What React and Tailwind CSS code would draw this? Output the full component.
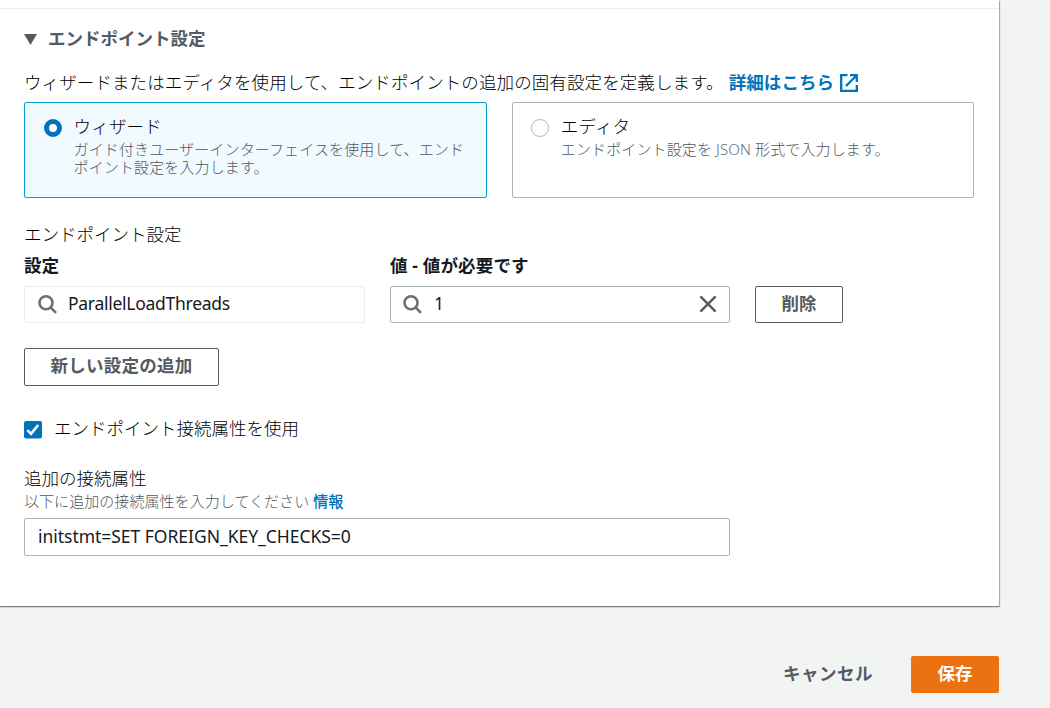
const FONT = "font-['Noto_Sans','Noto_Sans_CJK_JP',sans-serif]";
const JP = "font-['Noto_Sans','Noto_Sans_CJK_JP_Light','Noto_Sans_CJK_JP',sans-serif] font-light";

function SearchIcon() {
  return (
    <svg viewBox="0 0 20 20" className="h-5 w-5 shrink-0" fill="none" stroke="#687078" strokeWidth="2.6">
      <circle cx="8" cy="7.8" r="6.5" />
      <path d="M12.6 12.4 L18 17.8" />
    </svg>
  );
}

function CloseIcon() {
  return (
    <svg viewBox="0 0 18 18" className="mb-[2px] h-[18px] w-[18px] shrink-0" fill="none" stroke="#545b64" strokeWidth="2.5">
      <path d="M1.4 1.4 L16.6 16.6 M16.6 1.4 L1.4 16.6" />
    </svg>
  );
}

function ExternalIcon() {
  return (
    <svg viewBox="0 0 18 18" className="ml-[6px] mt-[2px] h-[18px] w-[18px] shrink-0" fill="none" stroke="#0073bb" strokeWidth="2.3">
      <path d="M7.5 1.2 H1.2 V16.8 H16.8 V11" />
      <path d="M10 1.2 H16.8 V8 M16.8 1.2 L6 12" />
    </svg>
  );
}

function Tile({ selected, title, children }) {
  return (
    <div
      className={
        "flex h-24 flex-1 rounded-[2px] border pt-[13px] " +
        (selected ? "border-[#00a1c9] bg-[#f1faff] pl-[19px]" : "border-[#aab7b8] bg-white pl-[18.5px]")
      }
    >
      <span
        className={
          "mt-[3px] h-[18px] w-[18px] shrink-0 rounded-full bg-white " +
          (selected ? "border-[5px] border-[#0073bb]" : "border-[1.5px] border-[#aab7b8]")
        }
      />
      <div className="ml-[11.5px] min-w-0">
        <div className={JP + " h-[24px] leading-[21px] tracking-[0.2px] text-black"}>{title}</div>
        <div className={JP + " whitespace-nowrap text-[15px] leading-[18px] tracking-[0.13px] text-[#4f575f]"}>
          {children}
        </div>
      </div>
    </div>
  );
}

export default function App() {
  return (
    <div className={FONT + " h-[708px] w-[1050px] overflow-hidden bg-[#f2f3f3] text-[17.5px] text-[#16191f]"}>
      <main className="h-[606px] w-[999px] bg-white shadow-[0_1px_1px_0_#778587,1px_1px_1px_0_#aab7b8]">
        <div className="h-[9px] border-b border-[#eaeded]" />
        <div className="px-6 pt-[17px]">
          <h2 className="flex h-6 items-center font-bold leading-6 text-[#545b64]">
            <svg viewBox="0 0 13 11" className="mr-[11px] mt-[2px] h-[11px] w-[13px]" fill="#545b64">
              <path d="M0 0 H13 L6.5 11 Z" />
            </svg>
            <span className="pb-px">エンドポイント設定</span>
          </h2>

          <p className="mt-[21px] flex h-[22px] items-center whitespace-nowrap leading-[22px] tracking-[0.1px]">
            <span className={JP + " text-black"}>
              ウィザードまたはエディタを使用して、エンドポイントの追加の固有設定を定義します。
            </span>
            <a className="ml-[5px] flex items-center font-bold text-[#0073bb]">
              詳細はこちら
              <ExternalIcon />
            </a>
          </p>

          <div className="mt-[9px] flex w-[950px] gap-[25px]">
            <Tile selected title="ウィザード">
              ガイド付きユーザーインターフェイスを使用して、エンド
              <br />
              ポイント設定を入力します。
            </Tile>
            <Tile title="エディタ">
              エンドポイント設定を <span className="text-[#687078]">JSON</span> 形式で入力します。
            </Tile>
          </div>

          <div className={JP + " mt-[25px] h-[22px] leading-[22px] text-black"}>エンドポイント設定</div>
          <div className="mt-[9px] flex h-[22px] font-bold leading-[22px]">
            <div className="w-[366px]">設定</div>
            <div className="tracking-[0.15px]">値 - 値が必要です</div>
          </div>
          <div className="mt-[10px] flex h-[37px] gap-[25px]">
            <div className="flex w-[341px] items-center rounded-[2px] border border-[#eaeded] pl-[12.5px]">
              <SearchIcon />
              <span className="ml-[10.5px] pb-[2px] tracking-[-0.27px]">ParallelLoadThreads</span>
            </div>
            <div className="flex w-[340px] items-center rounded-[2px] border border-[#aab7b8] pl-3 pr-3">
              <SearchIcon />
              <span className="ml-[11px] flex-1 pb-[2px]">1</span>
              <CloseIcon />
            </div>
            <button className="w-[88px] rounded-[2px] border border-[#545b64] pb-[3px] font-bold text-[#545b64]">
              削除
            </button>
          </div>
          <button className="mt-[25px] block h-[38px] w-[195px] rounded-[2px] border border-[#545b64] pb-[3px] font-bold tracking-[0.25px] text-[#545b64]">
            新しい設定の追加
          </button>

          <label className="mt-8 flex h-[22px] items-center leading-[22px]">
            <svg viewBox="0 0 18 18" className="mr-3 mt-px h-[18px] w-[18px]">
              <rect width="18" height="17.5" rx="2" fill="#0073bb" />
              <path d="M3.4 9.2 L7 12.8 L14.2 4" fill="none" stroke="#fff" strokeWidth="2.6" />
            </svg>
            <span className={JP + " pb-[2px] text-black"}>エンドポイント接続属性を使用</span>
          </label>

          <div className={JP + " mt-[27px] h-[22px] leading-[22px] text-black"}>追加の接続属性</div>
          <div className={JP + " mt-[3px] h-[18px] text-[15px] leading-[18px] tracking-[0.06px] text-[#4f575f]"}>
            以下に追加の接続属性を入力してください <a className="font-bold text-[#0073bb]">情報</a>
          </div>
          <div className="mt-2 flex h-[38px] w-[706px] items-center rounded-[2px] border border-[#aab7b8] pl-[13px]">
            <span className="pb-[2px] tracking-[-0.03px]">initstmt=SET FOREIGN_KEY_CHECKS=0</span>
          </div>
        </div>
      </main>

      <footer className="flex w-[999px] items-center justify-end pt-[50px]">
        <button className="mr-[38px] pb-[3px] font-bold tracking-[0.5px] text-[#545b64]">キャンセル</button>
        <button className="h-[37px] w-[88px] rounded-[2px] bg-[#ec7211] pb-[3px] font-bold text-white">保存</button>
      </footer>
    </div>
  );
}
